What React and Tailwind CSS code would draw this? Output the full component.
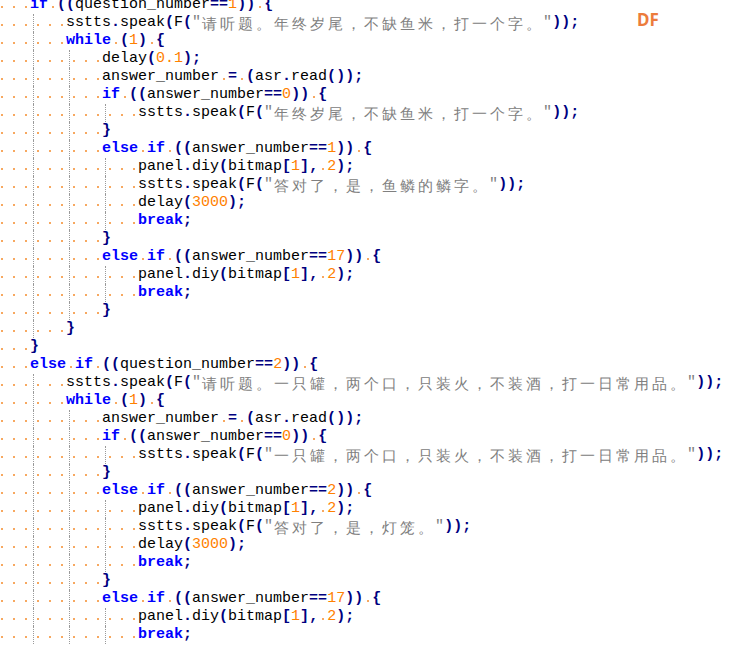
const LINES = [
  [3, 'if ((question_number==1)) {'],
  [6, 'sstts.speak(F("请听题。年终岁尾，不缺鱼米，打一个字。"));'],
  [6, 'while (1) {'],
  [9, 'delay(0.1);'],
  [9, 'answer_number = (asr.read());'],
  [9, 'if ((answer_number==0)) {'],
  [12, 'sstts.speak(F("年终岁尾，不缺鱼米，打一个字。"));'],
  [9, '}'],
  [9, 'else if ((answer_number==1)) {'],
  [12, 'panel.diy(bitmap[1], 2);'],
  [12, 'sstts.speak(F("答对了，是，鱼鳞的鳞字。"));'],
  [12, 'delay(3000);'],
  [12, 'break;'],
  [9, '}'],
  [9, 'else if ((answer_number==17)) {'],
  [12, 'panel.diy(bitmap[1], 2);'],
  [12, 'break;'],
  [9, '}'],
  [6, '}'],
  [3, '}'],
  [3, 'else if ((question_number==2)) {'],
  [6, 'sstts.speak(F("请听题。一只罐，两个口，只装火，不装酒，打一日常用品。"));'],
  [6, 'while (1) {'],
  [9, 'answer_number = (asr.read());'],
  [9, 'if ((answer_number==0)) {'],
  [12, 'sstts.speak(F("一只罐，两个口，只装火，不装酒，打一日常用品。"));'],
  [9, '}'],
  [9, 'else if ((answer_number==2)) {'],
  [12, 'panel.diy(bitmap[1], 2);'],
  [12, 'sstts.speak(F("答对了，是，灯笼。"));'],
  [12, 'delay(3000);'],
  [12, 'break;'],
  [9, '}'],
  [9, 'else if ((answer_number==17)) {'],
  [12, 'panel.diy(bitmap[1], 2);'],
  [12, 'break;'],
];

const KEYWORDS = ["if", "else", "while", "break"];

function tokenize(src) {
  const re = /("[^"]*")|( )|([A-Za-z_]\w*)|(\d+(?:\.\d+)?)|(.)/g;
  const out = [];
  let m;
  while ((m = re.exec(src))) {
    if (m[1]) out.push({ type: "str", text: m[1] });
    else if (m[2]) out.push({ type: "space" });
    else if (m[3]) out.push({ type: KEYWORDS.includes(m[3]) ? "kw" : "id", text: m[3] });
    else if (m[4]) out.push({ type: "num", text: m[4] });
    else out.push({ type: "op", text: m[5] });
  }
  return out;
}

function IndentCell({ guide }) {
  return (
    <span className="relative flex h-[18px] w-[12px] shrink-0 items-center">
      {guide && (
        <span className="absolute inset-y-0 left-[3px] border-l border-dotted border-[#9a9a9a]" />
      )}
      <span className="ml-[7px] mt-[3px] h-[2px] w-[2px] bg-[#f7a860]" />
    </span>
  );
}

function Token({ t }) {
  if (t.type === "space") {
    return (
      <span className="flex h-[18px] w-[9px] shrink-0 items-center justify-center">
        <span className="mt-[3px] h-[2px] w-[2px] bg-[#f7a860]" />
      </span>
    );
  }
  if (t.type === "str") {
    const inner = t.text.slice(1, -1);
    return (
      <span className="flex text-[#808080]">
        <span>"</span>
        <span className="pl-[1px] font-sans text-[15px] tracking-[3px]">{inner}</span>
        <span className="-ml-[1px]">"</span>
      </span>
    );
  }
  const cls = {
    kw: "font-bold text-[#0000ff]",
    id: "text-black",
    num: "text-[#ff8000]",
    op: "font-bold text-[#000080]",
  }[t.type];
  return <span className={cls}>{t.text}</span>;
}

function CodeLine({ indent, src }) {
  return (
    <div className="flex h-[18px] items-center whitespace-pre">
      {Array.from({ length: indent }, (_, i) => (
        <IndentCell key={i} guide={i > 0 && i % 3 === 0} />
      ))}
      {tokenize(src).map((t, i) => (
        <Token key={i} t={t} />
      ))}
    </div>
  );
}

export default function App() {
  return (
    <div className="relative h-[646px] w-[746px] overflow-hidden bg-white">
      <div className="-ml-[6px] -mt-[4px] flex flex-col font-mono text-[15px] leading-[18px]">
        {LINES.map(([indent, src], i) => (
          <CodeLine key={i} indent={indent} src={src} />
        ))}
      </div>

      {/* watermark */}
      <div className="absolute left-[637px] top-[11px] font-sans text-[17px] font-bold leading-[17px] text-[#ec7c3c]">
        DF
      </div>
    </div>
  );
}
